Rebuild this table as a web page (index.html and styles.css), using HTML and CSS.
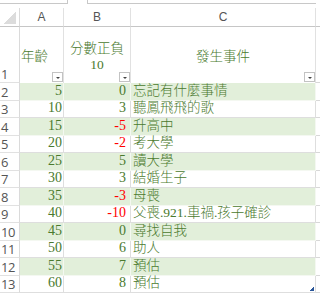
FILE: index.html
```html
<!DOCTYPE html>
<html>
<head>
<meta charset="utf-8">
<link rel="stylesheet" href="styles.css">
</head>
<body>
<div class="top"><div class="namebox"></div><div class="fx"></div></div>
<div class="sheet">
  <div class="corner"><span class="tri"></span></div>
  <div class="colh">A</div>
  <div class="colh">B</div>
  <div class="colh">C</div>
  <div class="edge"></div>

  <div class="rowh tall">1</div>
  <div class="hcell left"><span class="ht">年齡</span><span class="fb"></span></div>
  <div class="hcell center"><span class="ht">分數正負<br>10</span><span class="fb"></span></div>
  <div class="hcell center"><span class="ht">發生事件</span><span class="fb"></span></div>
  <div class="edge"></div>

  <div class="rowh">2</div><div class="cell num g">5</div><div class="cell num g">0</div><div class="cell txt g">忘記有什麼事情</div><div class="edge"></div>
  <div class="rowh">3</div><div class="cell num">10</div><div class="cell num">3</div><div class="cell txt">聽鳳飛飛的歌</div><div class="edge"></div>
  <div class="rowh">4</div><div class="cell num g">15</div><div class="cell num g neg">-5</div><div class="cell txt g">升高中</div><div class="edge"></div>
  <div class="rowh">5</div><div class="cell num">20</div><div class="cell num neg">-2</div><div class="cell txt">考大學</div><div class="edge"></div>
  <div class="rowh">6</div><div class="cell num g">25</div><div class="cell num g">5</div><div class="cell txt g">讀大學</div><div class="edge"></div>
  <div class="rowh">7</div><div class="cell num">30</div><div class="cell num">3</div><div class="cell txt">結婚生子</div><div class="edge"></div>
  <div class="rowh">8</div><div class="cell num g">35</div><div class="cell num g neg">-3</div><div class="cell txt g">母喪</div><div class="edge"></div>
  <div class="rowh">9</div><div class="cell num">40</div><div class="cell num neg">-10</div><div class="cell txt">父喪.921.車禍.孩子確診</div><div class="edge"></div>
  <div class="rowh">10</div><div class="cell num g">45</div><div class="cell num g">0</div><div class="cell txt g">尋找自我</div><div class="edge"></div>
  <div class="rowh">11</div><div class="cell num">50</div><div class="cell num">6</div><div class="cell txt">助人</div><div class="edge"></div>
  <div class="rowh">12</div><div class="cell num g">55</div><div class="cell num g">7</div><div class="cell txt g">預估</div><div class="edge"></div>
  <div class="rowh">13</div><div class="cell num">60</div><div class="cell num">8</div><div class="cell txt last">預估<span class="resize"></span></div><div class="edge"></div>
</div>
</body>
</html>
```

FILE: styles.css
```css
* { box-sizing: border-box; }
html, body { margin: 0; padding: 0; background: #fff; overflow: hidden; }
body { width: 320px; height: 293px; }

.top { display: flex; height: 4px; margin-bottom: 4px; }
.namebox { width: 68px; border-bottom: 1px solid #c8c8c8; border-right: 1px solid #c8c8c8; }
.fx { margin-left: 19px; width: 229px; border-bottom: 1px solid #c8c8c8; border-left: 1px solid #c8c8c8; }

.sheet {
  display: grid;
  grid-template-columns: 20px 44px 67px 185px 4px;
  grid-template-rows: 19px 56px repeat(6, 18px 17px);
}

.corner { border-right: 1px solid #dadada; border-bottom: 1px solid #c6c6c6; position: relative; }
.tri {
  position: absolute; right: 3px; bottom: 2px; width: 13px; height: 13px;
  background: linear-gradient(to bottom right, transparent 50%, #dcdcdc 50%);
}
.colh {
  border-right: 1px solid #e1e1e1; border-bottom: 1px solid #c6c6c6;
  font: 12px "Liberation Sans", Arial, sans-serif; color: #555;
  display: flex; align-items: center; justify-content: center; padding-bottom: 1px;
}
.edge { border-left: 0; border-bottom: 1px solid #d8d8d8; }
.sheet > .edge:nth-child(5) { border-bottom: 1px solid #c6c6c6; }

.rowh {
  border-right: 1px solid #dadada; border-bottom: 1px solid #e1e1e1;
  font: 13px "Open Sans", "Liberation Sans", sans-serif; color: #555;
  display: flex; align-items: flex-end; padding-left: 1px; line-height: 16px; letter-spacing: -0.5px;
}

.hcell {
  position: relative;
  border-right: 1px solid #e1e1e1;
  font: 300 13.5px/16px "Liberation Serif", "Noto Sans CJK TC", serif; color: #4a7a2e;
  display: flex; align-items: center; padding-top: 4px;
}
.hcell.left { padding-left: 1px; }
.hcell.center { justify-content: center; text-align: center; }
.ht { display: block; }
.fb {
  position: absolute; right: 0; bottom: 1px; width: 11px; height: 10px;
  border: 1px solid #c3c3c3; background: #fff;
}
.fb::after {
  content: ""; position: absolute; left: 3px; top: 4px;
  border-left: 2px solid transparent; border-right: 2px solid transparent; border-top: 2px solid #444;
}

.cell {
  border-right: 1px solid #dedede; border-bottom: 1px solid #dedede;
  font: 300 13.5px/16px "Liberation Serif", "Noto Sans CJK TC", serif; color: #4a7a2e;
  display: flex; align-items: flex-end; white-space: nowrap;
}
.cell.g { background: #e2efda; border-color: #f4f8f1; }
.cell.num { justify-content: flex-end; padding-right: 1px; padding-bottom: 1px; font-size: 14px; }
.sheet .cell.num:nth-child(5n+3) { padding-right: 4px; }
.cell.txt { padding-left: 2px; padding-bottom: 1px; }
.cell.neg { color: #ff0000; }
.cell.last { position: relative; }
.resize {
  position: absolute; right: 1px; bottom: 1px; width: 4px; height: 4px;
  background: linear-gradient(to bottom right, transparent 50%, #2a5699 50%);
}
```
